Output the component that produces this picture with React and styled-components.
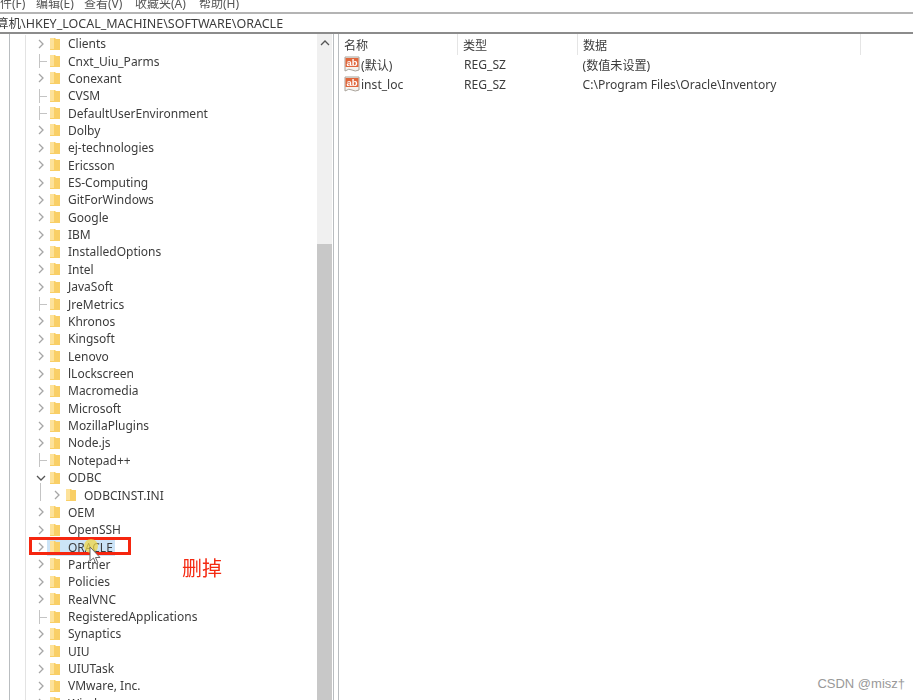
import React from "react";
import styled, { createGlobalStyle } from "styled-components";

const TREE = [
	{ name: "Clients", kids: true },
	{ name: "Cnxt_Uiu_Parms" },
	{ name: "Conexant", kids: true },
	{ name: "CVSM" },
	{ name: "DefaultUserEnvironment" },
	{ name: "Dolby", kids: true },
	{ name: "ej-technologies", kids: true },
	{ name: "Ericsson", kids: true },
	{ name: "ES-Computing", kids: true },
	{ name: "GitForWindows", kids: true },
	{ name: "Google", kids: true },
	{ name: "IBM", kids: true },
	{ name: "InstalledOptions", kids: true },
	{ name: "Intel", kids: true },
	{ name: "JavaSoft", kids: true },
	{ name: "JreMetrics" },
	{ name: "Khronos", kids: true },
	{ name: "Kingsoft", kids: true },
	{ name: "Lenovo", kids: true },
	{ name: "lLockscreen", kids: true },
	{ name: "Macromedia", kids: true },
	{ name: "Microsoft", kids: true },
	{ name: "MozillaPlugins", kids: true },
	{ name: "Node.js", kids: true },
	{ name: "Notepad++" },
	{ name: "ODBC", open: true },
	{ name: "ODBCINST.INI", kids: true, child: true },
	{ name: "OEM", kids: true },
	{ name: "OpenSSH", kids: true },
	{ name: "ORACLE", kids: true, selected: true },
	{ name: "Partner", kids: true },
	{ name: "Policies", kids: true },
	{ name: "RealVNC", kids: true },
	{ name: "RegisteredApplications" },
	{ name: "Synaptics", kids: true },
	{ name: "UIU", kids: true },
	{ name: "UIUTask", kids: true },
	{ name: "VMware, Inc.", kids: true },
	{ name: "Windows", kids: true },
];

const VALUES = [
	{ name: "(默认)", type: "REG_SZ", data: "(数值未设置)" },
	{ name: "inst_loc", type: "REG_SZ", data: "C:\\Program Files\\Oracle\\Inventory" },
];

function Folder() {
	return (
		<svg width="11" height="14" viewBox="0 0 11 14">
			<path d="M0 1h5l1 1h4v11H0z" fill="#f9cf66" />
			<path d="M0 1h4v11H0z" fill="#fde29a" />
		</svg>
	);
}

function Expander({ item }) {
	if (item.open) {
		return (
			<svg width="10" height="10" viewBox="0 0 10 10">
				<path d="M1 3l4 4 4-4" fill="none" stroke="#555" strokeWidth="1.3" />
			</svg>
		);
	}
	if (item.kids) {
		return (
			<svg width="10" height="10" viewBox="0 0 10 10">
				<path d="M3 1l4 4-4 4" fill="none" stroke="#a6a6a6" strokeWidth="1.3" />
			</svg>
		);
	}
	return <Stub />;
}

function StringIcon() {
	return (
		<svg width="16" height="17" viewBox="0 0 16 17">
			<path d="M1 1h14v13q-4 2-7 0t-7 1z" fill="#f7f3ee" stroke="#a9a39b" />
			<path d="M1.500 2h13v9h-13z" fill="#e0673c" />
			<text x="8" y="9.500" textAnchor="middle" fontSize="9.500" fontWeight="700" fill="#fff" fontFamily="Liberation Sans, sans-serif">
				ab
			</text>
		</svg>
	);
}

export default function App() {
	return (
		<>
			<GlobalStyle />
			<Page>
				<Shot>
					<MenuBar>
						<MenuItem $w={36}>件(F)</MenuItem>
						<MenuItem $w={48}>编辑(E)</MenuItem>
						<MenuItem $w={51}>查看(V)</MenuItem>
						<MenuItem $w={64}>收藏夹(A)</MenuItem>
						<MenuItem>帮助(H)</MenuItem>
					</MenuBar>
					<AddressBar>
						<AddressText>算机\HKEY_LOCAL_MACHINE\SOFTWARE\ORACLE</AddressText>
					</AddressBar>
					<Main>
						<TreePane>
							<TreeRows>
								{TREE.map((item) => (
									<TreeRow key={item.name} $child={item.child}>
										<ExpanderSlot>
											<Expander item={item} />
										</ExpanderSlot>
										<NodeBody $selected={item.selected}>
											<Folder />
											<NodeName>{item.name}</NodeName>
										</NodeBody>
									</TreeRow>
								))}
							</TreeRows>
							<Callout />
							<Highlight />
							<Pointer width="14" height="20" viewBox="0 0 14 20">
								<path d="M1 1v14l3.500-3 2.500 6 2-1-2.500-5.500H11z" fill="#fff" stroke="#666" />
							</Pointer>
							<Note>删掉</Note>
						</TreePane>
						<ScrollBar>
							<ScrollTrack>
								<svg width="10" height="6" viewBox="0 0 10 6">
									<path d="M1 5l4-4 4 4" fill="none" stroke="#555" strokeWidth="1.3" />
								</svg>
							</ScrollTrack>
							<ScrollThumb />
						</ScrollBar>
						<Splitter />
						<ListPane>
							<ListHeader>
								<HeaderCell $w={114}>名称</HeaderCell>
								<HeaderCell $w={120} $pad>类型</HeaderCell>
								<HeaderCell $w={283} $pad>数据</HeaderCell>
							</ListHeader>
							{VALUES.map((v) => (
								<ValueRow key={v.name}>
									<ValueName>
										<StringIcon />
										<span>{v.name}</span>
									</ValueName>
									<ValueType>{v.type}</ValueType>
									<span>{v.data}</span>
								</ValueRow>
							))}
						</ListPane>
					</Main>
				</Shot>
				<Watermark>CSDN @misz†</Watermark>
			</Page>
		</>
	);
}

const GlobalStyle = createGlobalStyle`
	html, body {
		margin: 0;
		padding: 0;
		background: #fff;
	}
`;

const Page = styled.div`
	position: relative;
	width: 913px;
	height: 700px;
	overflow: hidden;
	background: #fff;
	color: #3c3c3c;
	font-family: "Noto Sans", "Noto Sans CJK SC", sans-serif;
	font-size: 12px;
`;

const Shot = styled.div`
	filter: blur(0.35px);
`;

const MenuBar = styled.div`
	display: flex;
	height: 12px;
	border-bottom: 2px solid #b4b4b4;
	overflow: hidden;
	line-height: 8px;
	font-size: 12px;
	color: #555;
`;

const MenuItem = styled.span`
	flex: 0 0 ${(p) => (p.$w ? `${p.$w}px` : "auto")};
	white-space: nowrap;
`;

const AddressBar = styled.div`
	height: 18px;
	line-height: 20px;
	font-size: 12.5px;
	border-bottom: 2px solid #8c8c8c;
	overflow: hidden;
	white-space: nowrap;
`;

const AddressText = styled.span`
	display: block;
	margin-left: -4px;
`;

const Main = styled.div`
	display: flex;
	height: 666px;
`;

const TreePane = styled.div`
	position: relative;
	flex: 0 0 317px;
	box-sizing: border-box;
	padding: 1px 0 0 25px;
	overflow: hidden;
	background: linear-gradient(#b9bdc0, #b9bdc0) 9px 0 / 1px 100% no-repeat;
`;

const TreeRows = styled.div`
	border-left: 1px solid #e3e3e3;
	height: 100%;
	padding-left: 9px;
`;

const TreeRow = styled.div`
	position: relative;
	display: flex;
	align-items: center;
	height: 17.36px;
	padding-left: ${(p) => (p.$child ? "16px" : "0")};

	&::before {
		content: "";
		display: ${(p) => (p.$child ? "block" : "none")};
		position: absolute;
		left: 5px;
		top: -3px;
		width: 1px;
		height: 18px;
		background: #c4c4c4;
	}
`;

const ExpanderSlot = styled.div`
	display: flex;
	align-items: center;
	justify-content: center;
	flex: 0 0 12px;
	height: 100%;
`;

const Stub = styled.div`
	position: relative;
	box-sizing: border-box;
	width: 7px;
	height: 14px;
	margin-left: 3px;
	border-left: 1px solid #c4c4c4;

	&::after {
		content: "";
		position: absolute;
		left: 0;
		top: 7px;
		width: 7px;
		height: 1px;
		background: #c4c4c4;
	}
`;

const NodeBody = styled.div`
	display: flex;
	align-items: center;
	gap: 7px;
	height: 100%;
	padding: 0 2px 0 3px;
	background: ${(p) => (p.$selected ? "#cce4f7" : "transparent")};
`;

const NodeName = styled.span`
	white-space: nowrap;
`;

const Callout = styled.div`
	position: absolute;
	left: 29px;
	top: 503px;
	width: 96px;
	height: 12px;
	border: 3px solid #f5260f;
`;

const Highlight = styled.div`
	position: absolute;
	left: 84px;
	top: 505px;
	width: 14px;
	height: 14px;
	border-radius: 50%;
	background: rgba(240, 215, 70, 0.75);
`;

const Pointer = styled.svg`
	position: absolute;
	left: 89px;
	top: 512px;
`;

const Note = styled.div`
	position: absolute;
	left: 182px;
	top: 521px;
	font-size: 20px;
	line-height: 28px;
	color: #f42a12;
`;

const ScrollBar = styled.div`
	flex: 0 0 15px;
	display: flex;
	flex-direction: column;
`;

const ScrollTrack = styled.div`
	height: 210px;
	background: #f0f0f0;
	display: flex;
	justify-content: center;
	padding-top: 6px;
	box-sizing: border-box;
`;

const ScrollThumb = styled.div`
	flex: 1;
	background: #c8c8c8;
`;

const Splitter = styled.div`
	flex: 0 0 4px;
	margin-left: 1px;
	border-left: 1px solid #b9bdc0;
	border-right: 1px solid #b9bdc0;
`;

const ListPane = styled.div`
	flex: 1;
	padding-left: 5px;
	font-size: 12.1px;
`;

const ListHeader = styled.div`
	display: flex;
	height: 21px;
`;

const HeaderCell = styled.div`
	flex: 0 0 ${(p) => p.$w}px;
	box-sizing: border-box;
	border-right: 1px solid #e5e5e5;
	line-height: 23px;
	padding-left: ${(p) => (p.$pad ? "5px" : "0")};
`;

const ValueRow = styled.div`
	display: flex;
	height: 19.5px;
	align-items: center;
`;

const ValueName = styled.div`
	display: flex;
	align-items: center;
	flex: 0 0 120px;
	gap: 1px;
`;

const ValueType = styled.span`
	flex: 0 0 118.500px;
`;

const Watermark = styled.div`
	position: absolute;
	right: 8px;
	bottom: 9px;
	font-family: "Liberation Sans", sans-serif;
	font-size: 13px;
	color: #999;
`;
